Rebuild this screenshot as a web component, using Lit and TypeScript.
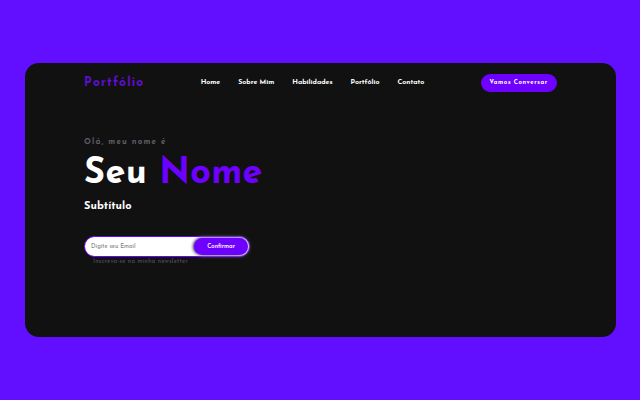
import { LitElement, html, css } from "lit";
import { customElement } from "lit/decorators.js";

const links = [
  { label: "Home", href: "#home" },
  { label: "Sobre Mim", href: "#sobre" },
  { label: "Habilidades", href: "#habilidades" },
  { label: "Portfólio", href: "#portfolio" },
  { label: "Contato", href: "#contato" },
];

@customElement("app-root")
export class AppRoot extends LitElement {
  static styles = css`
    :host {
      display: flex;
      align-items: center;
      min-height: 100vh;
      box-sizing: border-box;
      padding: 24px 24px 24px 25px;
      background: #630fff;
      font-family: "Josefin Sans", Lato, "Liberation Sans", sans-serif;
      color: #fff;
    }
    .card {
      flex: 1;
      box-sizing: border-box;
      padding: 10px 10% 70px;
      border-radius: 14px;
      background: #111;
    }
    .header {
      display: flex;
      align-items: center;
      justify-content: space-between;
      height: 20px;
    }
    .logo {
      color: #5f0fd0;
      font-size: 12px;
      line-height: 20px;
      font-weight: 700;
      letter-spacing: 0.1em;
      text-decoration: none;
    }
    .menu {
      display: flex;
      gap: 18px;
      margin: 0;
      padding: 0;
      list-style: none;
      font-size: 7px;
      line-height: 20px;
    }
    .link {
      color: #fff;
      font-weight: 700;
      text-decoration: none;
    }
    .talk,
    .confirm {
      border: 0;
      border-radius: 9px;
      background: #6e00ff;
      color: #fff;
      font-family: inherit;
      cursor: pointer;
    }
    .talk {
      height: 18px;
      padding: 0 9px 2px;
      font-size: 6px;
      font-weight: 700;
      letter-spacing: 0.1em;
    }
    .hello {
      margin: 43px 0 0;
      color: #5c5c62;
      font-size: 8px;
      line-height: 12px;
      font-weight: 700;
      letter-spacing: 0.15em;
    }
    .name {
      margin: 6px 0 0;
      font-size: 36px;
      line-height: 40px;
      font-weight: 700;
      letter-spacing: 0.01em;
    }
    .accent {
      color: #6e00ff;
    }
    .subtitle {
      margin: 5px 0 0;
      font-size: 11px;
      line-height: 16px;
      font-weight: 700;
    }
    .form {
      display: flex;
      align-items: center;
      box-sizing: border-box;
      width: 166px;
      height: 21px;
      margin-top: 21px;
      padding: 0 1px 0 6px;
      border: 1px solid #6e00ff;
      border-radius: 11px;
      background: #fff;
    }
    .email {
      flex: 1;
      min-width: 0;
      padding: 0;
      border: 0;
      outline: 0;
      background: none;
      color: #111;
      font-family: inherit;
      font-size: 6px;
    }
    .email::placeholder {
      color: #808080;
    }
    .confirm {
      width: 54px;
      height: 17px;
      padding: 0;
      font-size: 6px;
      font-weight: 600;
      box-shadow: -1px 0 3px #40306a, 0 0 4px #b9a0e8;
    }
    .note {
      display: block;
      margin-left: 9px;
      color: #55555a;
      font-size: 6px;
      line-height: 10px;
      letter-spacing: 0.05em;
    }
  `;

  render() {
    return html`
      <div class="card">
        <header class="header">
          <a class="logo" href="#home">Portfólio</a>
          <nav>
            <ul class="menu">
              ${links.map(
                (l) => html`<li><a class="link" href=${l.href}>${l.label}</a></li>`
              )}
            </ul>
          </nav>
          <button class="talk" type="button">Vamos Conversar</button>
        </header>
        <main>
          <p class="hello">Olá, meu nome é</p>
          <h1 class="name">Seu <span class="accent">Nome</span></h1>
          <h2 class="subtitle">Subtítulo</h2>
          <form class="form" @submit=${(e: Event) => e.preventDefault()}>
            <input class="email" id="email" type="email" placeholder="Digite seu Email" />
            <button class="confirm" type="submit">Confirmar</button>
          </form>
          <label class="note" for="email">Inscreva-se na minha newsletter</label>
        </main>
      </div>
    `;
  }
}
